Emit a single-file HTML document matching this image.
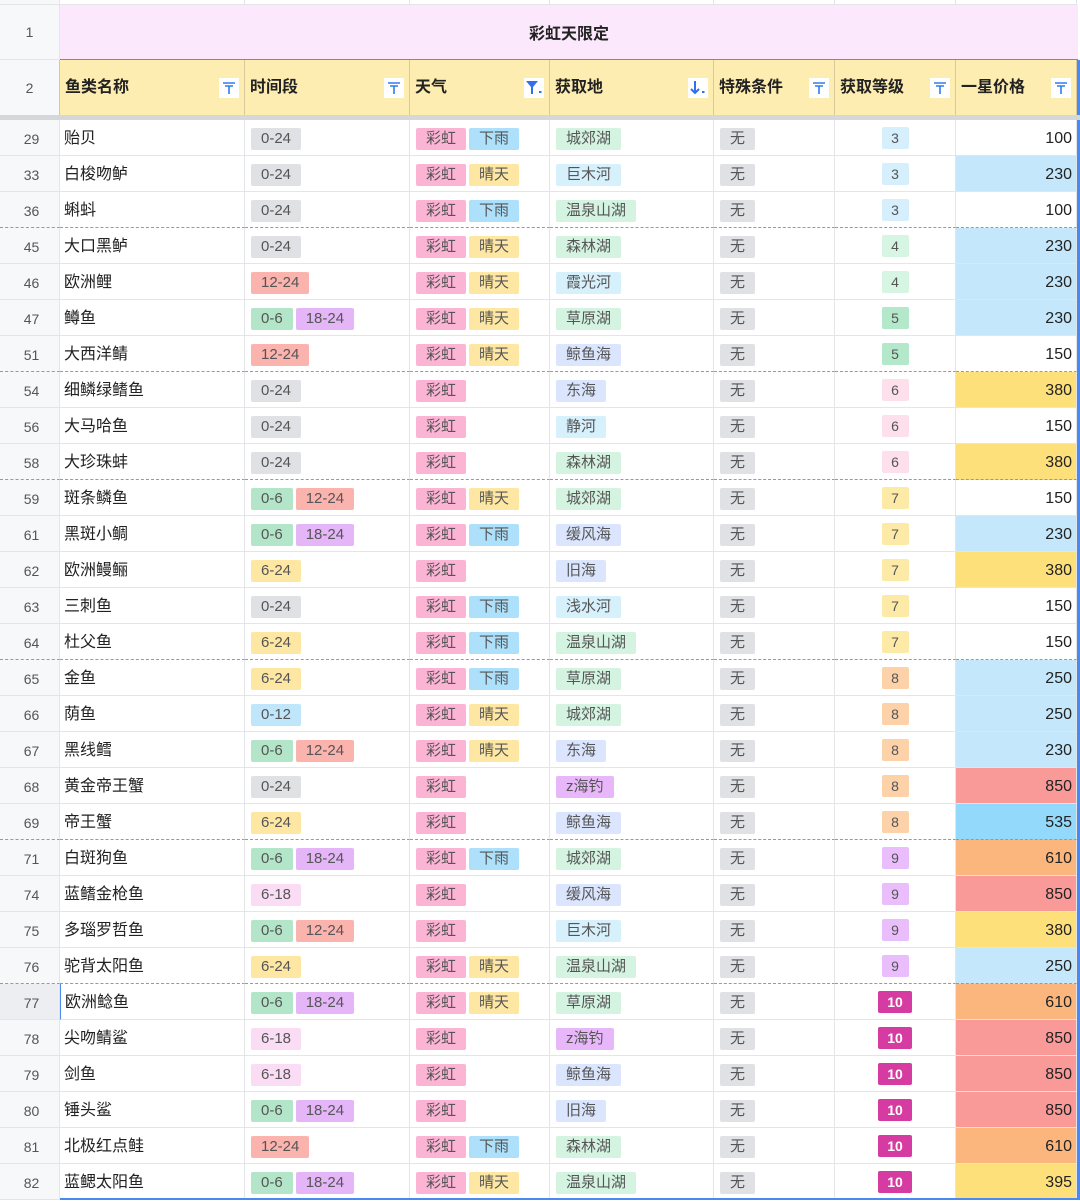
<!DOCTYPE html>
<html><head><meta charset="utf-8"><style>
*{box-sizing:border-box;margin:0;padding:0}
body{width:1080px;height:1201px;overflow:hidden;background:#fff;font-family:"Liberation Sans","Noto Sans CJK SC",sans-serif;position:relative}
.r{position:absolute;left:0;width:1080px;display:grid;grid-template-columns:60px 185px 165px 140px 164px 121px 121px 121px 3px}
.r>div{border-right:1px solid #e3e5e8;border-bottom:1px solid #e3e5e8;display:flex;align-items:center;overflow:hidden;white-space:nowrap;line-height:1}
.r>div:first-child{justify-content:center;color:#555;font-size:14px;background:#f7f8fa}
.r>div:last-child{border:none}
.d>div{height:36px;padding-left:4px;padding-top:2px}
.d>div:nth-child(2){padding-left:4px;font-size:16px;color:#222}
.d>div:nth-child(3),.d>div:nth-child(4),.d>div:nth-child(5),.d>div:nth-child(6){padding-left:6px}
.d>div:nth-child(7){justify-content:center;padding:0;padding-top:1px}
.d>div:nth-child(8){justify-content:flex-end;padding-right:4px;font-size:16px;color:#222}
.d>div:nth-child(9){background:#4a8af0}
.dash>div{border-bottom:1px dashed #999}
.t{display:inline-flex;align-items:center;height:22px;line-height:1;padding:0 10px;margin-right:3px;border-radius:2px;font-size:15px;color:#555}
.lv{display:inline-flex;align-items:center;justify-content:center;height:22px;line-height:1;min-width:27px;border-radius:2px;font-size:14px;color:#555}
.g{background:#dfe1e5}.rd{background:#fbb3ae}.gr{background:#b3e6c8}.pu{background:#e4b6f7}.ye{background:#fde7a3}.lb{background:#bfe6fb}.pk{background:#fbdcf5}
.rb{background:#fcb4d4}.ra{background:#ade0fb}.su{background:#fde7a3}
.pg{background:#d4f3e1}.pl{background:#d6f0fc}.pv{background:#dbe6fe}.pz{background:#e8b7fa}
.l3{background:#d5effc}.l4{background:#d6f5e2}.l5{background:#b4e8cb}.l6{background:#fde0ec}.l7{background:#fdeaa6}.l8{background:#fdd2a8}.l9{background:#eabefc}.l10{background:#d63ba1;color:#fff;font-weight:bold;min-width:34px}
.pB{background:#c4e7fc!important}.pY{background:#fde07a!important}.pR{background:#fa9a98!important}.pO{background:#fbb67e!important}.pD{background:#92d9fb!important}
.h>div{height:55px;background:#feedb1;font-weight:bold;font-size:16px;color:#222;padding-left:5px;justify-content:space-between;padding-right:5px;border-right:1px solid #d8c99a;border-bottom:none}
.ic{width:20px;height:20px;background:#fff;display:inline-flex;align-items:center;justify-content:center}
</style></head><body>
<div class="r" style="top:0;height:5px"><div style="height:5px"></div><div style="height:5px"></div><div style="height:5px"></div><div style="height:5px"></div><div style="height:5px"></div><div style="height:5px"></div><div style="height:5px"></div><div style="height:5px"></div><div></div></div>
<div style="position:absolute;top:5px;left:0;width:60px;height:55px;background:#f7f8fa;border-right:1px solid #e3e5e8;border-bottom:1px solid #e3e5e8;display:flex;align-items:center;justify-content:center;font-size:14px;color:#555">1</div>
<div style="position:absolute;top:5px;left:60px;width:1018px;height:55px;background:#fbe8fc;display:flex;align-items:center;justify-content:center;font-weight:bold;font-size:16px;color:#222;border-bottom:1px solid #5b8fd8">彩虹天限定</div>
<div class="r h" style="top:60px">
<div style="font-weight:normal;padding:0;justify-content:center;background:#f7f8fa;font-size:14px;color:#555">2</div>
<div>鱼类名称<span class="ic"><svg width="14" height="14" viewBox="0 0 14 14"><path d="M1 2H13M3 5H11M7 5V13" stroke="#2f7cf0" stroke-width="1.6" fill="none"/></svg></span></div>
<div>时间段<span class="ic"><svg width="14" height="14" viewBox="0 0 14 14"><path d="M1 2H13M3 5H11M7 5V13" stroke="#2f7cf0" stroke-width="1.6" fill="none"/></svg></span></div>
<div>天气<span class="ic"><svg width="18" height="16" viewBox="0 0 18 16"><path d="M1 1H13L8 7V14H6V7Z" fill="#2f6ff0"/><rect x="14" y="11" width="2.5" height="2" fill="#2f6ff0"/></svg></span></div>
<div>获取地<span class="ic"><svg width="18" height="16" viewBox="0 0 18 16"><path d="M6 1V13M2 9L6 13L10 9" stroke="#2f6ff0" stroke-width="2" fill="none"/><rect x="13" y="11" width="2.5" height="2" fill="#2f6ff0"/></svg></span></div>
<div>特殊条件<span class="ic"><svg width="14" height="14" viewBox="0 0 14 14"><path d="M1 2H13M3 5H11M7 5V13" stroke="#2f7cf0" stroke-width="1.6" fill="none"/></svg></span></div>
<div>获取等级<span class="ic"><svg width="14" height="14" viewBox="0 0 14 14"><path d="M1 2H13M3 5H11M7 5V13" stroke="#2f7cf0" stroke-width="1.6" fill="none"/></svg></span></div>
<div>一星价格<span class="ic"><svg width="14" height="14" viewBox="0 0 14 14"><path d="M1 2H13M3 5H11M7 5V13" stroke="#2f7cf0" stroke-width="1.6" fill="none"/></svg></span></div>
<div style="background:#4a8af0;padding:0"></div>
</div>
<div style="position:absolute;top:115px;left:0;width:1080px;height:5px;background:#d6d7d9"></div>
<div style="position:absolute;top:120px;left:0">
<div class="r d" style="position:relative"><div>29</div><div>贻贝</div><div><span class="t g">0-24</span></div><div><span class="t rb">彩虹</span><span class="t ra">下雨</span></div><div><span class="t pg">城郊湖</span></div><div><span class="t g">无</span></div><div><span class="lv l3">3</span></div><div>100</div><div></div></div>
<div class="r d" style="position:relative"><div>33</div><div>白梭吻鲈</div><div><span class="t g">0-24</span></div><div><span class="t rb">彩虹</span><span class="t su">晴天</span></div><div><span class="t pl">巨木河</span></div><div><span class="t g">无</span></div><div><span class="lv l3">3</span></div><div class="pB">230</div><div></div></div>
<div class="r d dash" style="position:relative"><div>36</div><div>蝌蚪</div><div><span class="t g">0-24</span></div><div><span class="t rb">彩虹</span><span class="t ra">下雨</span></div><div><span class="t pg">温泉山湖</span></div><div><span class="t g">无</span></div><div><span class="lv l3">3</span></div><div>100</div><div></div></div>
<div class="r d" style="position:relative"><div>45</div><div>大口黑鲈</div><div><span class="t g">0-24</span></div><div><span class="t rb">彩虹</span><span class="t su">晴天</span></div><div><span class="t pg">森林湖</span></div><div><span class="t g">无</span></div><div><span class="lv l4">4</span></div><div class="pB">230</div><div></div></div>
<div class="r d" style="position:relative"><div>46</div><div>欧洲鲤</div><div><span class="t rd">12-24</span></div><div><span class="t rb">彩虹</span><span class="t su">晴天</span></div><div><span class="t pl">霞光河</span></div><div><span class="t g">无</span></div><div><span class="lv l4">4</span></div><div class="pB">230</div><div></div></div>
<div class="r d" style="position:relative"><div>47</div><div>鳟鱼</div><div><span class="t gr">0-6</span><span class="t pu">18-24</span></div><div><span class="t rb">彩虹</span><span class="t su">晴天</span></div><div><span class="t pg">草原湖</span></div><div><span class="t g">无</span></div><div><span class="lv l5">5</span></div><div class="pB">230</div><div></div></div>
<div class="r d dash" style="position:relative"><div>51</div><div>大西洋鲭</div><div><span class="t rd">12-24</span></div><div><span class="t rb">彩虹</span><span class="t su">晴天</span></div><div><span class="t pv">鲸鱼海</span></div><div><span class="t g">无</span></div><div><span class="lv l5">5</span></div><div>150</div><div></div></div>
<div class="r d" style="position:relative"><div>54</div><div>细鳞绿鳍鱼</div><div><span class="t g">0-24</span></div><div><span class="t rb">彩虹</span></div><div><span class="t pv">东海</span></div><div><span class="t g">无</span></div><div><span class="lv l6">6</span></div><div class="pY">380</div><div></div></div>
<div class="r d" style="position:relative"><div>56</div><div>大马哈鱼</div><div><span class="t g">0-24</span></div><div><span class="t rb">彩虹</span></div><div><span class="t pl">静河</span></div><div><span class="t g">无</span></div><div><span class="lv l6">6</span></div><div>150</div><div></div></div>
<div class="r d dash" style="position:relative"><div>58</div><div>大珍珠蚌</div><div><span class="t g">0-24</span></div><div><span class="t rb">彩虹</span></div><div><span class="t pg">森林湖</span></div><div><span class="t g">无</span></div><div><span class="lv l6">6</span></div><div class="pY">380</div><div></div></div>
<div class="r d" style="position:relative"><div>59</div><div>斑条鳞鱼</div><div><span class="t gr">0-6</span><span class="t rd">12-24</span></div><div><span class="t rb">彩虹</span><span class="t su">晴天</span></div><div><span class="t pg">城郊湖</span></div><div><span class="t g">无</span></div><div><span class="lv l7">7</span></div><div>150</div><div></div></div>
<div class="r d" style="position:relative"><div>61</div><div>黑斑小鲷</div><div><span class="t gr">0-6</span><span class="t pu">18-24</span></div><div><span class="t rb">彩虹</span><span class="t ra">下雨</span></div><div><span class="t pv">缓风海</span></div><div><span class="t g">无</span></div><div><span class="lv l7">7</span></div><div class="pB">230</div><div></div></div>
<div class="r d" style="position:relative"><div>62</div><div>欧洲鳗鲡</div><div><span class="t ye">6-24</span></div><div><span class="t rb">彩虹</span></div><div><span class="t pv">旧海</span></div><div><span class="t g">无</span></div><div><span class="lv l7">7</span></div><div class="pY">380</div><div></div></div>
<div class="r d" style="position:relative"><div>63</div><div>三刺鱼</div><div><span class="t g">0-24</span></div><div><span class="t rb">彩虹</span><span class="t ra">下雨</span></div><div><span class="t pl">浅水河</span></div><div><span class="t g">无</span></div><div><span class="lv l7">7</span></div><div>150</div><div></div></div>
<div class="r d dash" style="position:relative"><div>64</div><div>杜父鱼</div><div><span class="t ye">6-24</span></div><div><span class="t rb">彩虹</span><span class="t ra">下雨</span></div><div><span class="t pg">温泉山湖</span></div><div><span class="t g">无</span></div><div><span class="lv l7">7</span></div><div>150</div><div></div></div>
<div class="r d" style="position:relative"><div>65</div><div>金鱼</div><div><span class="t ye">6-24</span></div><div><span class="t rb">彩虹</span><span class="t ra">下雨</span></div><div><span class="t pg">草原湖</span></div><div><span class="t g">无</span></div><div><span class="lv l8">8</span></div><div class="pB">250</div><div></div></div>
<div class="r d" style="position:relative"><div>66</div><div>荫鱼</div><div><span class="t lb">0-12</span></div><div><span class="t rb">彩虹</span><span class="t su">晴天</span></div><div><span class="t pg">城郊湖</span></div><div><span class="t g">无</span></div><div><span class="lv l8">8</span></div><div class="pB">250</div><div></div></div>
<div class="r d" style="position:relative"><div>67</div><div>黑线鳕</div><div><span class="t gr">0-6</span><span class="t rd">12-24</span></div><div><span class="t rb">彩虹</span><span class="t su">晴天</span></div><div><span class="t pv">东海</span></div><div><span class="t g">无</span></div><div><span class="lv l8">8</span></div><div class="pB">230</div><div></div></div>
<div class="r d" style="position:relative"><div>68</div><div>黄金帝王蟹</div><div><span class="t g">0-24</span></div><div><span class="t rb">彩虹</span></div><div><span class="t pz">z海钓</span></div><div><span class="t g">无</span></div><div><span class="lv l8">8</span></div><div class="pR">850</div><div></div></div>
<div class="r d dash" style="position:relative"><div>69</div><div>帝王蟹</div><div><span class="t ye">6-24</span></div><div><span class="t rb">彩虹</span></div><div><span class="t pv">鲸鱼海</span></div><div><span class="t g">无</span></div><div><span class="lv l8">8</span></div><div class="pD">535</div><div></div></div>
<div class="r d" style="position:relative"><div>71</div><div>白斑狗鱼</div><div><span class="t gr">0-6</span><span class="t pu">18-24</span></div><div><span class="t rb">彩虹</span><span class="t ra">下雨</span></div><div><span class="t pg">城郊湖</span></div><div><span class="t g">无</span></div><div><span class="lv l9">9</span></div><div class="pO">610</div><div></div></div>
<div class="r d" style="position:relative"><div>74</div><div>蓝鳍金枪鱼</div><div><span class="t pk">6-18</span></div><div><span class="t rb">彩虹</span></div><div><span class="t pv">缓风海</span></div><div><span class="t g">无</span></div><div><span class="lv l9">9</span></div><div class="pR">850</div><div></div></div>
<div class="r d" style="position:relative"><div>75</div><div>多瑙罗哲鱼</div><div><span class="t gr">0-6</span><span class="t rd">12-24</span></div><div><span class="t rb">彩虹</span></div><div><span class="t pl">巨木河</span></div><div><span class="t g">无</span></div><div><span class="lv l9">9</span></div><div class="pY">380</div><div></div></div>
<div class="r d dash" style="position:relative"><div>76</div><div>驼背太阳鱼</div><div><span class="t ye">6-24</span></div><div><span class="t rb">彩虹</span><span class="t su">晴天</span></div><div><span class="t pg">温泉山湖</span></div><div><span class="t g">无</span></div><div><span class="lv l9">9</span></div><div class="pB">250</div><div></div></div>
<div class="r d" style="position:relative"><div style="background:#eceef1">77</div><div style="border-left:1px solid #4a8af0">欧洲鲶鱼</div><div><span class="t gr">0-6</span><span class="t pu">18-24</span></div><div><span class="t rb">彩虹</span><span class="t su">晴天</span></div><div><span class="t pg">草原湖</span></div><div><span class="t g">无</span></div><div><span class="lv l10">10</span></div><div class="pO">610</div><div></div></div>
<div class="r d" style="position:relative"><div>78</div><div>尖吻鲭鲨</div><div><span class="t pk">6-18</span></div><div><span class="t rb">彩虹</span></div><div><span class="t pz">z海钓</span></div><div><span class="t g">无</span></div><div><span class="lv l10">10</span></div><div class="pR">850</div><div></div></div>
<div class="r d" style="position:relative"><div>79</div><div>剑鱼</div><div><span class="t pk">6-18</span></div><div><span class="t rb">彩虹</span></div><div><span class="t pv">鲸鱼海</span></div><div><span class="t g">无</span></div><div><span class="lv l10">10</span></div><div class="pR">850</div><div></div></div>
<div class="r d" style="position:relative"><div>80</div><div>锤头鲨</div><div><span class="t gr">0-6</span><span class="t pu">18-24</span></div><div><span class="t rb">彩虹</span></div><div><span class="t pv">旧海</span></div><div><span class="t g">无</span></div><div><span class="lv l10">10</span></div><div class="pR">850</div><div></div></div>
<div class="r d" style="position:relative"><div>81</div><div>北极红点鲑</div><div><span class="t rd">12-24</span></div><div><span class="t rb">彩虹</span><span class="t ra">下雨</span></div><div><span class="t pg">森林湖</span></div><div><span class="t g">无</span></div><div><span class="lv l10">10</span></div><div class="pO">610</div><div></div></div>
<div class="r d" style="position:relative"><div>82</div><div>蓝鳃太阳鱼</div><div><span class="t gr">0-6</span><span class="t pu">18-24</span></div><div><span class="t rb">彩虹</span><span class="t su">晴天</span></div><div><span class="t pg">温泉山湖</span></div><div><span class="t g">无</span></div><div><span class="lv l10">10</span></div><div class="pY">395</div><div></div></div>
</div>
<div style="position:absolute;top:1198px;left:60px;width:1020px;height:2px;background:#4a8af0"></div>
</body></html>
